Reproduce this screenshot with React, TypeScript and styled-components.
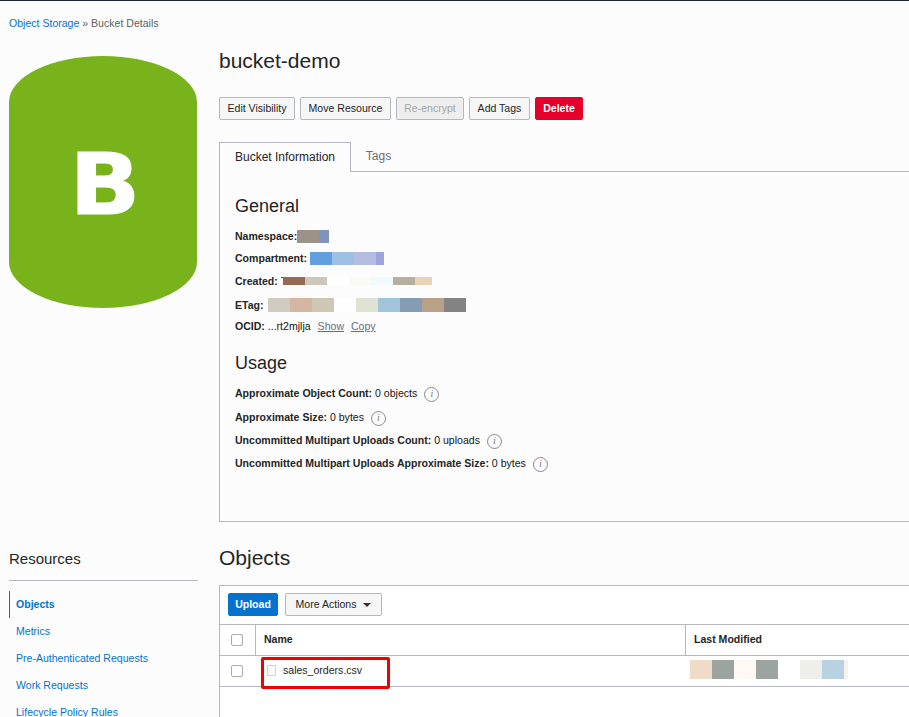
import React from "react";
import styled, { createGlobalStyle } from "styled-components";

const Global = createGlobalStyle`
  html, body { margin: 0; padding: 0; background: #fcfcfc; }
  body { font-family: "Liberation Sans", Arial, sans-serif; font-size: 10.55px; color: #161513; }
  * { box-sizing: border-box; }
`;

const Page = styled.div`
  width: 909px;
  height: 717px;
  overflow: hidden;
  border-top: 1px solid #1c2733;
  background: #fcfcfc;
`;
const Crumbs = styled.nav`
  height: 45px;
  padding: 15px 0 0 9px;
  line-height: 14px;
  color: #5f5f5f;
`;
const Link = styled.a`
  color: #0572ce;
  text-decoration: none;
`;
const TopSection = styled.section`
  display: grid;
  grid-template-columns: 219px 690px;
  height: 476px;
`;
const IconCol = styled.div`
  padding: 10px 0 0 9px;
`;
const Bucket = styled.div`
  width: 188px;
  height: 252px;
  background: #79b31b;
  border-radius: 94px / 46px;
  color: #fff;
  display: flex;
  align-items: center;
  justify-content: center;
  font-family: "DejaVu Sans", sans-serif;
  font-weight: 700;
  font-size: 86px;
  line-height: 1;
  padding: 3px 0 0 4px;
  -webkit-text-stroke: 1px #fff;
`;
const BucketLetter = styled.span`
  display: block;
  transform: scaleX(1.08);
`;
const DetailCol = styled.div`
  display: flex;
  flex-direction: column;
`;
const Title = styled.h1`
  margin: 0;
  height: 51px;
  padding-top: 3px;
  font-weight: 400;
  font-size: 21px;
  line-height: 24px;
  color: #252525;
`;
const Actions = styled.div`
  display: flex;
  gap: 5px;
  height: 45px;
`;
const Button = styled.button<{ $w: number; $kind?: "danger" | "disabled" | "primary" }>`
  width: ${(p) => p.$w}px;
  height: 23px;
  padding: 0 0 1px;
  border-radius: 2px;
  font-family: inherit;
  font-size: 10.55px;
  display: inline-flex;
  align-items: center;
  justify-content: center;
  gap: 7px;
  border: 1px solid
    ${(p) => (p.$kind === "danger" ? "#e4002b" : p.$kind === "primary" ? "#0572ce" : "#b5b8bf")};
  background: ${(p) =>
    p.$kind === "danger" ? "#e4002b" : p.$kind === "primary" ? "#0572ce" : p.$kind === "disabled" ? "#eeeeee" : "#f6f6f6"};
  color: ${(p) => (p.$kind === "danger" || p.$kind === "primary" ? "#fff" : p.$kind === "disabled" ? "#a5a5a5" : "#252525")};
  font-weight: ${(p) => (p.$kind === "danger" || p.$kind === "primary" ? 700 : 400)};
`;
const Tabs = styled.div`
  display: flex;
  height: 30px;
  border-bottom: 1px solid #b5b8bf;
`;
const Tab = styled.div<{ $active?: boolean }>`
  height: ${(p) => (p.$active ? "30px" : "28px")};
  width: ${(p) => (p.$active ? "132px" : "55px")};
  display: flex;
  align-items: center;
  justify-content: center;
  font-size: 12px;
  padding-bottom: ${(p) => (p.$active ? "2px" : "0")};
  color: ${(p) => (p.$active ? "#252525" : "#6f6f6f")};
  background: ${(p) => (p.$active ? "#fcfcfc" : "transparent")};
  ${(p) => p.$active && "border: 1px solid #b5b8bf; border-bottom: none;"}
`;
const Panel = styled.div`
  flex: 1;
  border-left: 1px solid #b5b8bf;
  border-bottom: 1px solid #b5b8bf;
  padding: 24px 0 0 15px;
`;
const Section = styled.h2<{ $mt?: number }>`
  margin: ${(p) => p.$mt ?? 0}px 0 7px;
  font-weight: 400;
  font-size: 18px;
  line-height: 20px;
  color: #252525;
`;
const Row = styled.div<{ $h: number }>`
  height: ${(p) => p.$h}px;
  display: flex;
  align-items: center;
  white-space: pre;
`;
const Label = styled.b`
  font-weight: 700;
  color: #252525;
`;
const Mosaic = styled.span<{ $h: number; $ml?: number }>`
  display: inline-flex;
  height: ${(p) => p.$h}px;
  margin-left: ${(p) => p.$ml ?? 0}px;
`;
const Cell = styled.i<{ $c: string; $w?: number }>`
  display: block;
  width: ${(p) => p.$w ?? 22}px;
  background: ${(p) => p.$c};
`;
const TextLink = styled.a`
  color: #5f6f86;
  text-decoration: underline;
  margin-left: 7px;
`;
const InfoBadge = styled.span`
  margin: 2px 0 0 7px;
  width: 15px;
  height: 15px;
  border: 1px solid #8a8a8a;
  border-radius: 50%;
  display: inline-flex;
  align-items: center;
  justify-content: center;
  font-family: "Liberation Serif", serif;
  font-style: italic;
  font-size: 10px;
  line-height: 1;
  color: #7a7a7a;
`;
const BottomSection = styled.section`
  display: grid;
  grid-template-columns: 219px 690px;
`;
const Aside = styled.aside`
  padding: 26px 0 0 9px;
`;
const AsideTitle = styled.h3`
  margin: 0;
  width: 189px;
  height: 33px;
  border-bottom: 1px solid #b5b8bf;
  font-weight: 400;
  font-size: 15px;
  line-height: 22px;
  color: #252525;
`;
const Nav = styled.ul`
  list-style: none;
  margin: 10px 0 0;
  padding: 0;
`;
const NavItem = styled.li<{ $active?: boolean }>`
  height: 27px;
  line-height: 27px;
  padding-left: ${(p) => (p.$active ? "6px" : "7px")};
  ${(p) => p.$active && "border-left: 1px solid #0572ce; font-weight: 700;"}
  color: #0572ce;
  white-space: nowrap;
`;
const ObjectsCol = styled.div``;
const ObjectsTitle = styled.h2`
  margin: 0;
  height: 63px;
  padding-top: 23px;
  font-weight: 400;
  font-size: 21px;
  line-height: 26px;
  color: #252525;
`;
const TableBox = styled.div`
  border: 1px solid #b5b8bf;
  border-right: none;
  border-bottom: none;
  background: #fff;
  height: 140px;
`;
const Toolbar = styled.div`
  height: 39px;
  padding: 7px 0 0 8px;
  display: flex;
  gap: 7px;
  border-bottom: 1px solid #b5b8bf;
`;
const Caret = styled.span`
  width: 0;
  height: 0;
  margin-top: 1px;
  border-left: 4.5px solid transparent;
  border-right: 4.5px solid transparent;
  border-top: 4.5px solid #333;
`;
const TableRow = styled.div`
  display: grid;
  grid-template-columns: 35px 430px 1fr;
  border-bottom: 1px solid #b5b8bf;
  height: 31px;
`;
const CheckCell = styled.div`
  display: flex;
  align-items: center;
  justify-content: center;
  padding-right: 2px;
`;
const Check = styled.span`
  display: block;
  width: 12px;
  height: 12px;
  border: 1px solid #a9abb0;
  border-radius: 2px;
  background: #fff;
`;
const HeadCell = styled.div`
  border-left: 1px solid #b5b8bf;
  display: flex;
  align-items: center;
  padding: 0 0 2px 8px;
  font-weight: 700;
  color: #252525;
`;
const NameCell = styled.div`
  position: relative;
  display: flex;
  align-items: center;
  gap: 7px;
  padding: 0 0 2px 12px;
  color: #252525;
`;
const RedBox = styled.span`
  position: absolute;
  left: 6px;
  top: 1px;
  width: 129px;
  height: 32px;
  border: 3px solid #f20000;
  border-radius: 2px;
`;
const DateCell = styled.div`
  display: flex;
  align-items: flex-start;
  padding: 4px 0 0 5px;
`;

const ns = ["#9c9287", "#7f93bd"];
const comp = ["#629fde", "#9dc0e4", "#b3bde1", "#9fa4da"];
const created = ["#956b58", "#cdc7bc", "#ffffff", "#fbfbf6", "#f0f9fc", "#b5b0a1", "#e9d4b9"];
const etag = ["#d1ccc0", "#d4b6a2", "#cdc7b3", "#fefefe", "#e0e2d4", "#a3c5d9", "#849db4", "#b8a187", "#838383"];
const date = ["#efdbc8", "#9ca4a1", "#fff9f3", "#9ca4a1", "#ffffff", "#eeeeea", "#b8d2e1"];

const Info = () => <InfoBadge>i</InfoBadge>;

const FileIcon = () => (
  <svg width="9" height="11" viewBox="0 0 9 11">
    <rect x="0.5" y="0.5" width="8" height="10" fill="#fbfbfb" stroke="#d4d4d4" />
  </svg>
);

export default function App() {
  return (
    <Page>
      <Global />
      <Crumbs>
        <Link>Object Storage</Link> » Bucket Details
      </Crumbs>
      <TopSection>
        <IconCol>
          <Bucket><BucketLetter>B</BucketLetter></Bucket>
        </IconCol>
        <DetailCol>
          <Title>bucket-demo</Title>
          <Actions>
            <Button $w={76}>Edit Visibility</Button>
            <Button $w={91}>Move Resource</Button>
            <Button $w={68} $kind="disabled">Re-encrypt</Button>
            <Button $w={61}>Add Tags</Button>
            <Button $w={48} $kind="danger">Delete</Button>
          </Actions>
          <Tabs>
            <Tab $active>Bucket Information</Tab>
            <Tab>Tags</Tab>
          </Tabs>
          <Panel>
            <Section>General</Section>
            <Row $h={26}>
              <Label>Namespace:</Label>
              <Mosaic $h={13}>{ns.map((c, i) => <Cell key={i} $c={c} $w={i ? 10 : 22} />)}</Mosaic>
            </Row>
            <Row $h={18}>
              <Label>Compartment:</Label>
              <Mosaic $h={13} $ml={3}>{comp.map((c, i) => <Cell key={i} $c={c} $w={i === 3 ? 8 : 22} />)}</Mosaic>
            </Row>
            <Row $h={28}>
              <Label>Created: </Label>T
              <Mosaic $h={8} $ml={-4}>{created.map((c, i) => <Cell key={i} $c={c} $w={i === 6 ? 17 : 22} />)}</Mosaic>
            </Row>
            <Row $h={20}>
              <Label>ETag:</Label>
              <Mosaic $h={14} $ml={4}>{etag.map((c, i) => <Cell key={i} $c={c} />)}</Mosaic>
            </Row>
            <Row $h={22}>
              <Label>OCID:</Label> ...rt2mjlja
              <TextLink>Show</TextLink>
              <TextLink>Copy</TextLink>
            </Row>
            <Section $mt={16}>Usage</Section>
            <Row $h={26}><Label>Approximate Object Count:</Label> 0 objects<Info /></Row>
            <Row $h={22}><Label>Approximate Size:</Label> 0 bytes<Info /></Row>
            <Row $h={24}><Label>Uncommitted Multipart Uploads Count:</Label> 0 uploads<Info /></Row>
            <Row $h={22}><Label>Uncommitted Multipart Uploads Approximate Size:</Label> 0 bytes<Info /></Row>
          </Panel>
        </DetailCol>
      </TopSection>
      <BottomSection>
        <Aside>
          <AsideTitle>Resources</AsideTitle>
          <Nav>
            <NavItem $active>Objects</NavItem>
            <NavItem>Metrics</NavItem>
            <NavItem>Pre-Authenticated Requests</NavItem>
            <NavItem>Work Requests</NavItem>
            <NavItem>Lifecycle Policy Rules</NavItem>
          </Nav>
        </Aside>
        <ObjectsCol>
          <ObjectsTitle>Objects</ObjectsTitle>
          <TableBox>
            <Toolbar>
              <Button $w={50} $kind="primary">Upload</Button>
              <Button $w={97}>More Actions <Caret /></Button>
            </Toolbar>
            <TableRow>
              <CheckCell><Check /></CheckCell>
              <HeadCell>Name</HeadCell>
              <HeadCell>Last Modified</HeadCell>
            </TableRow>
            <TableRow>
              <CheckCell><Check /></CheckCell>
              <NameCell>
                <FileIcon />
                sales_orders.csv
                <RedBox />
              </NameCell>
              <DateCell>
                <Mosaic $h={19}>
                  {date.map((c, i) => <Cell key={i} $c={c} />)}
                  <Cell $c="#f5f3ee" $w={4} />
                </Mosaic>
              </DateCell>
            </TableRow>
          </TableBox>
        </ObjectsCol>
      </BottomSection>
    </Page>
  );
}
